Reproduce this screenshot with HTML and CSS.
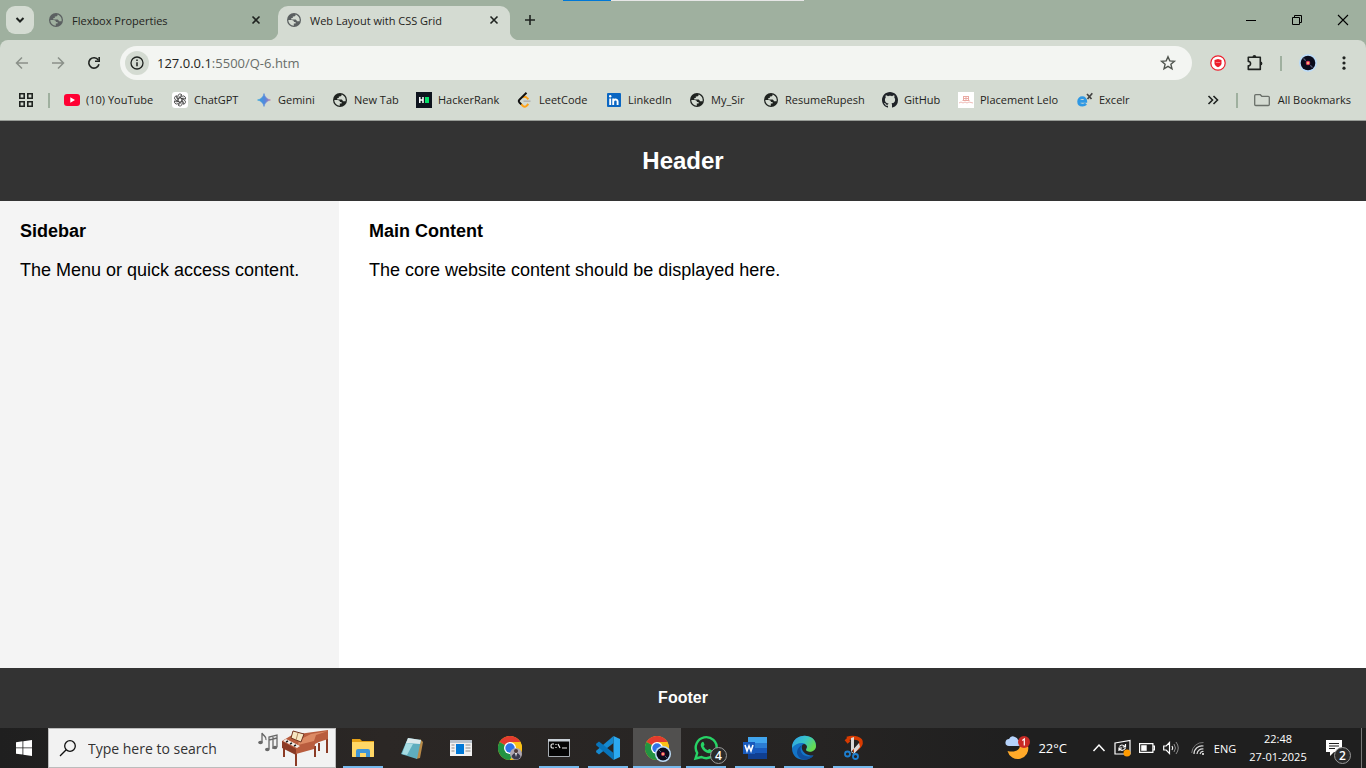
FILE: index.html
```
<!DOCTYPE html>
<html lang="en">
<head>
<meta charset="utf-8">
<title>Web Layout with CSS Grid</title>
<link rel="stylesheet" href="styles.css">
</head>
<body>
<svg class="defs" aria-hidden="true">
  <symbol id="globe" viewBox="0 0 16 16">
    <circle cx="8" cy="8" r="7" fill="currentColor"/>
    <path class="land" d="M2.300 7.900h3.200c1.500 0 2.500.8 2.500 2h1.600v1.700H7.800v2.200A5.800 5.800 0 0 1 2.300 7.900zM9.600 2.500c.1 1.200-.6 1.900-1.700 1.900H6.800v1.600H5.300v1.500h3.500c1.300 0 1.900.7 2.100 1.700h2.700c.6-2.600-.9-5.600-4-6.700z"/>
  </symbol>
  <symbol id="cross" viewBox="0 0 10 10"><path d="M1.500 1.500l7 7m0-7l-7 7" fill="none" stroke="currentColor" stroke-width="1.600"/></symbol>
  <symbol id="chrome" viewBox="0 0 24 24">
    <circle cx="12" cy="12" r="12" fill="#fbc116"/>
    <path d="M12 12L1.600 6A12 12 0 0 1 22.400 6z" fill="#e33b2e"/>
    <path d="M12 12L1.600 6A12 12 0 0 0 12 24l5.200-9z" fill="#229342"/>
    <path d="M12 6h10.400A12 12 0 0 1 12 24l5.200-9z" fill="#fbc116"/>
    <circle cx="12" cy="12" r="6" fill="#fff"/><circle cx="12" cy="12" r="4.700" fill="#2f73e8"/>
  </symbol>
  <symbol id="disc" viewBox="0 0 16 16">
    <circle cx="8" cy="8" r="8" fill="#bcdcf8"/><circle cx="8" cy="8" r="6.500" fill="#0a0b1c"/>
    <path d="M4 4l2 2M10 10l2 2" stroke="#505575"/><circle cx="8" cy="8" r="2" fill="#d93a63"/><circle cx="8" cy="8" r="1" fill="#ffc36b"/>
  </symbol>
</svg>

<div class="screen">
  <header class="browser">
    <div class="tabstrip">
      <button class="tab-search" aria-label="Search tabs"><svg width="10" height="10" viewBox="0 0 10 10"><path d="M1.500 3L5 6.500 8.500 3" fill="none" stroke="currentColor" stroke-width="2"/></svg></button>
      <div class="tab">
        <svg class="favicon" width="16" height="16"><use href="#globe"/></svg>
        <span class="tab-title">Flexbox Properties</span>
        <button class="tab-close" aria-label="Close tab"><svg width="10" height="10"><use href="#cross"/></svg></button>
      </div>
      <div class="tab active">
        <svg class="favicon" width="16" height="16"><use href="#globe"/></svg>
        <span class="tab-title">Web Layout with CSS Grid</span>
        <button class="tab-close" aria-label="Close tab"><svg width="10" height="10"><use href="#cross"/></svg></button>
      </div>
      <button class="new-tab" aria-label="New tab"><svg width="12" height="12" viewBox="0 0 12 12"><path d="M6 1v10M1 6h10" stroke="currentColor" stroke-width="1.600"/></svg></button>
      <div class="window-buttons">
        <button aria-label="Minimize"><svg width="10" height="10" viewBox="0 0 10 10"><path d="M0 5.500h10" stroke="currentColor"/></svg></button>
        <button aria-label="Restore"><svg width="10" height="10" viewBox="0 0 10 10"><path d="M.5 2.500h7v7h-7zM2.500 2V.5h7v7H8" fill="none" stroke="currentColor"/></svg></button>
        <button aria-label="Close"><svg width="10" height="10" viewBox="0 0 10 10"><path d="M0 0l10 10M10 0L0 10" stroke="currentColor" stroke-width="1.100"/></svg></button>
      </div>
      <div class="progress"><span class="progress-done"></span></div>
    </div>

    <div class="toolbar">
      <button class="tool muted" aria-label="Back"><svg width="16" height="16" viewBox="0 0 16 16"><path d="M14 8H3M8 2.500L2.500 8 8 13.500" fill="none" stroke="currentColor" stroke-width="1.500"/></svg></button>
      <button class="tool muted" aria-label="Forward"><svg width="16" height="16" viewBox="0 0 16 16"><path d="M2 8h11M8 2.500L13.500 8 8 13.500" fill="none" stroke="currentColor" stroke-width="1.500"/></svg></button>
      <button class="tool" aria-label="Reload"><svg width="16" height="16" viewBox="0 0 16 16"><path d="M13 9.300A5.200 5.200 0 1 1 12.300 5" fill="none" stroke="currentColor" stroke-width="1.600"/><path d="M14 2v5H9V5.400h3.400V2z" fill="currentColor"/></svg></button>
      <div class="omnibox">
        <button class="site-info" aria-label="Site information"><svg width="14" height="14" viewBox="0 0 14 14"><circle cx="7" cy="7" r="6" fill="none" stroke="currentColor" stroke-width="1.300"/><path d="M7 6.200v4M7 3.600v1.400" stroke="currentColor" stroke-width="1.500"/></svg></button>
        <div class="url"><span class="host">127.0.0.1</span>:5500/Q-6.htm</div>
        <button class="star" aria-label="Bookmark"><svg width="16" height="16" viewBox="0 0 16 16"><path d="M8 1.700l1.800 4.200 4.600.4-3.500 3 1.100 4.500L8 11.400l-4 2.400 1.100-4.500-3.500-3 4.600-.4z" fill="none" stroke="currentColor" stroke-width="1.400"/></svg></button>
      </div>
      <button class="tool" aria-label="Ad blocker"><svg width="16" height="16" viewBox="0 0 16 16"><circle cx="8" cy="8" r="7.200" fill="#fff" stroke="#ed1c2b" stroke-width="1.200"/><path d="M8 4l3.500 1v3.200c0 1.800-1.300 3-3.500 4-2.200-1-3.500-2.200-3.500-4V5z" fill="#ed1c2b"/><path d="M5.800 7.500h4.400" stroke="#fff" stroke-opacity=".4"/></svg></button>
      <button class="tool" aria-label="Extensions"><svg width="18" height="18" viewBox="0 0 18 18"><path d="M3.300 3.300h12v12.100h-12v-3.600c3 .3 3-4.700 0-4.400z" fill="none" stroke="currentColor" stroke-width="1.600" stroke-linejoin="round"/><path d="M7.500 3a1.900 1.900 0 0 1 3.800 0zM15.500 7.500a1.900 1.900 0 0 1 0 3.800z" fill="currentColor"/></svg></button>
      <span class="divider"></span>
      <button class="tool" aria-label="Profile"><svg width="18" height="18"><use href="#disc"/></svg></button>
      <button class="tool" aria-label="Menu"><svg width="16" height="16" viewBox="0 0 16 16" fill="currentColor"><circle cx="8" cy="2.800" r="1.600"/><circle cx="8" cy="8" r="1.600"/><circle cx="8" cy="13.200" r="1.600"/></svg></button>
    </div>

    <nav class="bookmarks" aria-label="Bookmarks">
      <button class="apps" aria-label="Apps"><svg width="14" height="14" viewBox="0 0 14 14"><path d="M.800.800h4.400v4.400H.8zM8.800.800h4.400v4.400H8.800zM.8 8.800h4.400v4.400H.8zM8.800 8.800h4.400v4.400H8.800z" fill="none" stroke="currentColor" stroke-width="1.600"/></svg></button>
      <span class="divider"></span>
      <div class="bookmark-list">
        <a href="#"><svg width="16" height="16" viewBox="0 0 16 16"><rect y="2" width="16" height="12" rx="3" fill="#ff0033"/><path d="M6.300 5.300v5.400L11 8z" fill="#fff"/></svg>(10) YouTube</a>
        <a href="#"><svg width="16" height="16" viewBox="0 0 16 16"><rect width="16" height="16" rx="3" fill="#fff"/><g fill="none" stroke="#333" stroke-width=".8"><path id="petal" d="M8 5.600L5.900 6.800V4.200a2.200 2.200 0 0 1 4.100-1.100L7.800 4.400v2.300"/><use href="#petal" transform="rotate(60 8 8)"/><use href="#petal" transform="rotate(120 8 8)"/><use href="#petal" transform="rotate(180 8 8)"/><use href="#petal" transform="rotate(240 8 8)"/><use href="#petal" transform="rotate(300 8 8)"/></g></svg>ChatGPT</a>
        <a href="#"><svg width="16" height="16" viewBox="0 0 16 16"><defs><linearGradient id="gem"><stop stop-color="#2fa3de"/><stop offset=".6" stop-color="#5a86dc"/><stop offset="1" stop-color="#b87aa8"/></linearGradient></defs><path d="M8 1.500C8.700 5 11 7.300 14.500 8 11 8.700 8.700 11 8 14.500 7.300 11 5 8.700 1.500 8 5 7.300 7.300 5 8 1.500z" fill="url(#gem)" stroke="url(#gem)" stroke-width=".6"/></svg>Gemini</a>
        <a href="#"><svg width="16" height="16"><use href="#globe"/></svg>New Tab</a>
        <a href="#"><svg width="16" height="16" viewBox="0 0 16 16"><path d="M0 0h16v16H0z" fill="#0e141e"/><path d="M3.800 5v6M7 5v6M3.800 8H7" stroke="#fff" stroke-width="1.500"/><path d="M9 5h4v6H9z" fill="#05e06a"/></svg>HackerRank</a>
        <a href="#"><svg width="16" height="16" viewBox="0 0 16 16"><path d="M6.500 9.200h7" stroke="#b3b3b3" stroke-width="1.600"/><path d="M4 12l2 2c1 .9 2.400.9 3.400 0l2-2M5.800 5.600c1.200-1.200 2.700-1.200 3.900 0l1.700 1.600" fill="none" stroke="#ffa116" stroke-width="1.900"/><path d="M9.500.7L2.400 7.700c-.9.900-.9 1.900 0 2.800L4.300 12.400" fill="none" stroke="#111" stroke-width="1.900"/></svg>LeetCode</a>
        <a href="#"><svg width="16" height="16" viewBox="0 0 16 16"><rect x="1" y="1" width="14" height="14" rx="1" fill="#0a66c2"/><path d="M4.200 6.500V13M7.200 6.500V13M7.300 9.500c0-2.400 4.300-2.800 4.300 0V13" fill="none" stroke="#fff" stroke-width="1.900"/><circle cx="4.200" cy="4.200" r="1.200" fill="#fff"/></svg>LinkedIn</a>
        <a href="#"><svg width="16" height="16"><use href="#globe"/></svg>My_Sir</a>
        <a href="#"><svg width="16" height="16"><use href="#globe"/></svg>ResumeRupesh</a>
        <a href="#"><svg width="16" height="16" viewBox="0 0 16 16"><path fill="#1f2328" d="M8 0C3.580 0 0 3.580 0 8c0 3.540 2.290 6.530 5.470 7.590.4.070.55-.17.55-.38 0-.19-.01-.82-.01-1.490-2.010.37-2.530-.49-2.690-.94-.09-.23-.48-.94-.82-1.130-.28-.15-.68-.52-.01-.53.63-.01 1.080.58 1.230.82.72 1.210 1.870.87 2.330.66.07-.52.28-.87.51-1.070-1.780-.2-3.640-.89-3.640-3.950 0-.87.31-1.590.82-2.150-.08-.2-.36-1.020.08-2.120 0 0 .67-.21 2.200.82.64-.18 1.320-.27 2-.27s1.360.09 2 .27c1.530-1.040 2.200-.82 2.200-.82.44 1.100.16 1.920.08 2.120.51.56.82 1.270.82 2.150 0 3.070-1.870 3.750-3.650 3.950.29.25.54.73.54 1.480 0 1.070-.01 1.930-.01 2.200 0 .21.15.46.55.38A8.010 8.010 0 0 0 16 8c0-4.420-3.580-8-8-8z"/></svg>GitHub</a>
        <a href="#"><svg width="16" height="16" viewBox="0 0 16 16"><path d="M0 0h16v16H0z" fill="#fff"/><g stroke="#e9aaa3" fill="none"><path d="M5 4.500h6M5 6.500h6M4.500 8.500h7M5.500 4v4M8 4v4M10.500 4v4"/><path d="M1 11l2-1 2 1 2-1 2 1 2-1 4 1" stroke-width=".8"/></g></svg>Placement Lelo</a>
        <a href="#"><svg width="16" height="16" viewBox="0 0 16 16"><path d="M1.500 9.300h7.300c0-2.300-1.500-3.600-3.500-3.600S1.600 7.200 1.600 9.400s1.600 3.700 3.900 3.700c1.500 0 2.600-.5 3.500-1.400" fill="none" stroke="#2e98e4" stroke-width="2.700"/><path d="M10 2l4.500 5M15.300 1.200L10.500 7" stroke="#444" stroke-width="1.700"/></svg>Excelr</a>
      </div>
      <button class="overflow" aria-label="More bookmarks"><svg width="12" height="10" viewBox="0 0 12 10"><path d="M1.500 1l4 4-4 4M6.500 1l4 4-4 4" fill="none" stroke="currentColor" stroke-width="1.600"/></svg></button>
      <span class="divider"></span>
      <button class="all-bookmarks"><svg width="16" height="14" viewBox="0 0 16 14"><path d="M1.700 1.700h4.600l1.500 1.600h6.500q1 0 1 1v7.200q0 1-1 1H1.700q-1 0-1-1V2.700q0-1 1-1z" fill="none" stroke="#6a706a" stroke-width="1.300"/></svg>All Bookmarks</button>
    </nav>
  </header>

  <div class="page">
    <header class="page-header"><h1>Header</h1></header>
    <aside class="sidebar"><h2>Sidebar</h2><p>The Menu or quick access content.</p></aside>
    <main class="content"><h2>Main Content</h2><p>The core website content should be displayed here.</p></main>
    <footer class="page-footer">Footer</footer>
  </div>

  <footer class="taskbar">
    <button class="start" aria-label="Start"><svg width="16" height="16" viewBox="0 0 16 16" fill="#fff"><path d="M0 2.200l6.500-.9v6.200H0zM7.300 1.200L16 0v7.500H7.300zM0 8.300h6.500v6.300L0 13.700zM7.300 8.300H16V16l-8.700-1.300z"/></svg></button>
    <label class="search">
      <svg width="18" height="18" viewBox="0 0 18 18"><circle cx="11" cy="7" r="5.300" fill="none" stroke="#111" stroke-width="1.300"/><path d="M7.200 10.800L1 17" stroke="#111" stroke-width="1.300"/></svg>
      <input type="text" placeholder="Type here to search" aria-label="Search">
      <svg width="72" height="38" viewBox="0 0 72 38">
        <g stroke="#686868" stroke-width="1.300" fill="none"><path d="M5 13V4c1 3 5 3 4 7M12 20V8l8-2v12M12 11l8-2M16 20V7"/></g>
        <g fill="#686868"><ellipse cx="3.500" cy="13.500" rx="2.300" ry="1.800"/><ellipse cx="10.300" cy="20.500" rx="2.300" ry="1.800"/><ellipse cx="18" cy="18.500" rx="2.300" ry="1.800"/></g>
        <path d="M27 16v12M39 24v13M58 17v11M70 9v15M62 14v8" stroke="#8b3b25" stroke-width="2"/>
        <path d="M25 12l10-6 14-2 22-3v9l-9 3-4 2-1 5-18 5-14-8z" fill="#b95d3e"/>
        <path d="M42 11l12-6 17-3-12 4-2 6-16 4z" fill="#dc8a64"/>
        <path d="M25 12l14 8v6l-14-7z" fill="#8b3b25"/>
        <path d="M26 12l3-2 14 7-3 2z" fill="#f6eee8"/><path d="M29 13l2-1M33 15l2-1M37 17l2-1" stroke="#222" stroke-width="1.500"/>
        <path d="M36 2l11 3-3 8-10-4z" fill="#f7e6c2" stroke="#70331f"/><path d="M41 4l-2 7" stroke="#b28a60"/>
      </svg>
    </label>
    <div class="apps-row">
      <button class="app running" aria-label="File Explorer"><svg width="24" height="24" viewBox="0 0 24 24"><path d="M1 3h8l2 2h12v16H1z" fill="#e5a117"/><path d="M1 6h22v14q0 1-1 1H2q-1 0-1-1z" fill="#ffd766"/><path d="M5 21v-6q0-2 2-2h10q2 0 2 2v6h-4v-4H9v4z" fill="#3f96d8"/></svg></button>
      <button class="app" aria-label="Notepad"><svg width="24" height="24" viewBox="0 0 24 24"><path d="M20 3l3 3-3 16-4 1z" fill="#b98b48"/><path d="M8 2l13 2-4 19L1 18z" fill="#5faebe"/><path d="M8 2l13 2-1 4L6 7z" fill="#dce9eb"/><path d="M6 7l7 1-6 11-5-1z" fill="#a7dce3"/></svg></button>
      <button class="app" aria-label="Run"><svg width="24" height="24" viewBox="0 0 24 24"><path d="M1 4h22v16H1z" fill="#f1f1f1"/><path d="M1 4h22v3H1z" fill="#b9c2cb"/><path d="M7 8h8v10H7z" fill="#0078d7"/><path d="M2.500 9h3M2.500 12h3M2.500 15h3M16.500 9h5M16.500 12h5M16.500 15h5" stroke="#8b8b8b"/></svg></button>
      <button class="app" aria-label="Chrome"><svg width="24" height="24" viewBox="0 0 24 24"><use href="#chrome"/><circle cx="18" cy="18" r="6" fill="#afa7b0"/><circle cx="18" cy="15" r="2" fill="#503a37"/><path d="M13.500 21q1-4 4.500-4t4.500 4q-4 5-9 0z" fill="#39394c"/><path d="M17 17h2l-1 4z" fill="#eee"/></svg></button>
      <button class="app running" aria-label="Command Prompt"><svg width="24" height="24" viewBox="0 0 24 24"><path d="M1.500 3.500h21v17h-21z" fill="#050505" stroke="#a7adb3"/><path d="M1 3h22v2.500H1z" fill="#c9d0d7"/><path d="M7 8H5q-1 0-1 2t1 2h2M9 8v1m0 2v1M11 8l2 4M15 12h5" fill="none" stroke="#eee" stroke-width="1.200"/></svg></button>
      <button class="app running" aria-label="Visual Studio Code"><svg width="24" height="24" viewBox="0 0 24 24"><path d="M17.500 0L24 3v18l-6.500 3z" fill="#2ba9f1"/><path d="M17.500 0v7L3 18.500.5 16.500q-1-1 0-2z" fill="#1689cf"/><path d="M17.500 24v-7L3 5.500.5 7.500q-1 1 0 2z" fill="#0874ba"/></svg></button>
      <button class="app running current" aria-label="Chrome profile"><svg width="24" height="24" viewBox="0 0 24 24"><use href="#chrome"/><use href="#disc" x="10" y="10" width="16" height="16"/></svg></button>
      <button class="app running" aria-label="WhatsApp, 4 unread"><svg width="24" height="24" viewBox="0 0 24 24"><path d="M1.500 22.500L3.200 17A10.500 10.500 0 1 1 7.500 21z" fill="none" stroke="#27d366" stroke-width="2.400"/><path d="M7.700 6.500q1.500-1.500 2 0l.8 2q.2.700-1 1.700 1.400 2.800 4.300 4 1.200-1.500 1.800-1.200l2.300 1.200q.7.500-.3 2c-2 2-5.500.7-7.600-1.200C7.500 12.500 5.500 9 7.700 6.500z" fill="#27d366"/></svg><span class="badge">4</span></button>
      <button class="app running" aria-label="Word"><svg width="24" height="24" viewBox="0 0 24 24"><path d="M5 1h19v6H5z" fill="#41a5ee"/><path d="M5 7h19v5H5z" fill="#2b7cd3"/><path d="M5 12h19v5H5z" fill="#185abd"/><path d="M5 17h19v6H5z" fill="#103f91"/><path d="M0 6h12v12H0z" fill="#185abd"/><path d="M2 9l2 6 2-5 2 5 2-6" fill="none" stroke="#fff" stroke-width="1.600"/></svg></button>
      <button class="app running" aria-label="Edge"><svg width="24" height="24" viewBox="0 0 24 24"><defs><linearGradient id="ed" x1="0" y1="0" x2="1" y2=".5"><stop stop-color="#2f9ded"/><stop offset=".55" stop-color="#38c5c7"/><stop offset="1" stop-color="#66dc4f"/></linearGradient></defs><path d="M0 12C0-4 24-4 24 9.500c0 5-6 7-9 5-2-1 0-2 0-4 0-1.500-1.500-2.500-3-2.500-4 0-3.500 12 9.500 11.500C16 26 0 26 0 12z" fill="#1475c8"/><path d="M0 12C0-4 24-4 24 10c0 5-6 7-9 5-2-1 0-2 0-4 0-5-10-6-15 1z" fill="url(#ed)"/><path d="M8.500 13c0 6 6 9 13 6.500C18 25 7 26 5 17c0-4 2-7 6-8-2 1-2.500 2-2.500 4z" fill="#104f9d"/></svg></button>
      <button class="app running" aria-label="Snip"><svg width="24" height="24" viewBox="0 0 24 24"><path d="M6 2.500c7-2 15-.5 14 5-1 4-5 6-8 7.500M5 3l3 3.500" fill="none" stroke="#d83b01" stroke-width="3.600"/><path d="M10 2l3-1v16l-3-2zM18 7l-8 9 3 2 6-7z" fill="#d9d9d9"/><circle cx="6.500" cy="18" r="2.500" fill="none" stroke="#1e7fd0" stroke-width="1.800"/><circle cx="14.500" cy="20.500" r="2.500" fill="none" stroke="#1e7fd0" stroke-width="1.800"/></svg></button>
    </div>
    <div class="tray">
      <button class="weather"><svg width="25" height="24" viewBox="0 0 25 24"><path d="M23 10a10.500 10.500 0 0 1-20.500 5c9 2 14-2 12-8z" fill="#ffa929"/><path d="M4 10q-4 0-3.500-4Q1 3 4 3q2-4 6-2 3 1 3 3 3 0 3 3t-3 3z" fill="#b6d3fb"/><circle cx="19" cy="6" r="6" fill="#c92a25"/><path d="M17.300 4.500L19.300 3v6.500" fill="none" stroke="#fff" stroke-width="1.200"/></svg>22°C</button>
      <button class="tray-icon" aria-label="Show hidden icons"><svg width="14" height="14" viewBox="0 0 14 14"><path d="M1.500 10L7 4l5.500 6" fill="none" stroke="#fff" stroke-width="1.500"/></svg></button>
      <button class="tray-icon" aria-label="Updates"><svg width="18" height="18" viewBox="0 0 18 18"><path d="M1 4l15-2.500V15H1z" fill="none" stroke="#fff" stroke-width="1.200"/><path d="M11.500 5v3H8.700M5 12V9h3M5.500 7.500q2-3 5.500 0M5.500 10q3 3 6-1" fill="none" stroke="#fff" stroke-width="1.200"/><circle cx="13" cy="14" r="3.500" fill="#ff9b00"/></svg></button>
      <button class="tray-icon" aria-label="Battery"><svg width="16" height="10" viewBox="0 0 16 10"><path d="M.6.600h13.300v8.800H.6zM14 3h1.400v4H14" fill="none" stroke="#fff" stroke-width="1.200"/><path d="M2.200 2.200h5.500v5.600H2.200z" fill="#fff"/></svg></button>
      <button class="tray-icon" aria-label="Volume"><svg width="16" height="14" viewBox="0 0 16 14"><path d="M.7 5h2.500l3.300-3.500v11L3.200 9H.7zM9 5q1.500 2 0 4" fill="none" stroke="#fff" stroke-width="1.200"/><path d="M11 3q3 4 0 8M13 1q4.500 6 0 12" fill="none" stroke="#8c8c8c"/></svg></button>
      <button class="tray-icon wide" aria-label="Network"><svg width="14" height="14" viewBox="0 0 14 14"><path d="M3 13A8 8 0 0 1 12.500 5M6 13a5.500 5.500 0 0 1 6.500-5M9 13q1-3 3.500-2.500" fill="none" stroke="#ddd" stroke-width="1.200"/><path d="M.7 12A11 11 0 0 1 12.500 1.500" fill="none" stroke="#777"/><circle cx="12" cy="13" r="1" fill="#fff"/></svg></button>
      <button class="language">ENG</button>
      <button class="clock"><time>22:48</time><span>27-01-2025</span></button>
      <button class="notifications" aria-label="2 notifications"><svg width="18" height="18" viewBox="0 0 18 18"><path d="M1 1h16v12H9l-4 4v-4H1z" fill="#fff"/><path d="M4 4.500h10M4 7h10M4 9.500h6" stroke="#1f1f1f"/></svg><span class="badge">2</span></button>
      <span class="desktop-edge"></span>
    </div>
  </footer>
</div>
</body>
</html>
```
FILE: styles.css
```
* { box-sizing: border-box; }
body {
  margin: 0;
  font-family: "Open Sans", "Noto Sans", sans-serif;
  font-size: 11px;
  color: #1f2320;
}
button {
  display: flex;
  align-items: center;
  justify-content: center;
  padding: 0;
  border: 0;
  background: none;
  color: inherit;
  font: inherit;
  white-space: nowrap;
}
svg { flex: none; overflow: visible; }
.defs { position: absolute; width: 0; height: 0; }

.screen { display: flex; flex-direction: column; min-height: 100vh; }

/* Browser chrome */
.browser { background: #9fb09f; border-bottom: 1px solid #979b96; }
.tabstrip { position: relative; display: flex; align-items: center; height: 40px; }
.tab-search { width: 28px; height: 28px; margin-left: 6px; border-radius: 9px; background: #d4dbd2; }
.tab {
  position: relative;
  display: flex;
  align-items: center;
  gap: 8px;
  width: 232px;
  height: 34px;
  padding: 0 8px 6px;
  margin: 6px 0 0 6px;
  --land: #9fb09f;
}
.favicon { color: #5b6061; }
.land { fill: var(--land, #d4dbd2); }
.tab.active { --land: #d4dbd2; background: #d4dbd2; border-radius: 10px 10px 0 0; }
.tab.active::before, .tab.active::after {
  content: "";
  position: absolute;
  bottom: 0;
  width: 10px;
  height: 10px;
}
.tab.active::before { left: -10px; background: radial-gradient(circle at 0 0, transparent 10px, #d4dbd2 11px); }
.tab.active::after { right: -10px; background: radial-gradient(circle at 100% 0, transparent 10px, #d4dbd2 11px); }
.tab-title { flex: 1; white-space: nowrap; }
.tab-close { width: 16px; height: 16px; }
.new-tab { width: 28px; height: 28px; margin-left: 6px; }
.window-buttons { display: flex; margin-left: auto; color: #000; }
.window-buttons button { width: 46px; height: 40px; }
.progress { position: absolute; top: 0; left: 563px; width: 241px; height: 1px; background: #e6e6e6; }
.progress-done { display: block; width: 20%; height: 1px; background: #0078d7; }

.toolbar {
  display: flex;
  align-items: center;
  height: 40px;
  padding: 6px 4px 0;
  border-radius: 8px 8px 0 0;
  background: #d4dbd2;
}
.tool { width: 36px; height: 34px; }
.muted { color: #8a9089; }
.omnibox {
  display: flex;
  align-items: center;
  flex: 1;
  height: 34px;
  margin: 0 8px;
  padding: 0 16px 0 5px;
  border-radius: 17px;
  background: #f3f5f2;
}
.site-info { width: 24px; height: 24px; border-radius: 50%; background: #d4dbd2; }
.url { flex: 1; margin-left: 8px; font-size: 13px; color: #686d69; }
.host { color: #1f2320; }
.star { color: #50554f; }
.divider { width: 2px; height: 15px; margin: 0 8px; background: #9fb09f; }

.bookmarks { display: flex; align-items: center; height: 40px; padding: 0 15px 0 14px; background: #d4dbd2; line-height: 14px; }
.apps { width: 24px; height: 24px; }
.bookmarks .divider { margin: 0 14px 0 10px; }
.bookmark-list {
  display: grid;
  grid-template-columns: 108px 84px 76px 84px 101px 89px 83px 74px 119px 76px 119px auto;
  flex: 1;
}
.bookmark-list a { display: flex; align-items: center; gap: 6px; color: inherit; text-decoration: none; white-space: nowrap; }
.overflow { width: 28px; height: 28px; }
.bookmarks .overflow + .divider { margin: 0 16px 0 9px; }
.all-bookmarks { gap: 8px; }

/* Web page */
.page {
  display: grid;
  grid-template: auto 1fr auto / 1fr 3fr;
  column-gap: 10px;
  flex: 1;
  background: #fff;
  color: #000;
  font: 18px/20px "Liberation Sans", Arial, sans-serif;
}
.page-header, .page-footer { grid-column: 1 / -1; background: #333; color: #fff; text-align: center; font-weight: bold; }
.page-header { padding: 20px; }
.page-header h1 { margin: 0; font-size: 24px; line-height: 40px; }
.page-footer { padding: 20px; font-size: 16px; }
.sidebar, .content { padding: 20px; }
.sidebar { background: #f4f4f4; }
.page h2 { margin: 0 0 19px; font-size: 18px; line-height: 20px; }
.page p { margin: 0; }

/* Taskbar */
.taskbar { display: flex; height: 40px; background: linear-gradient(90deg, #1f1f1f, #2b2725 28%, #262423 60%, #1f1f1f 75%); color: #fff; }
.start { width: 48px; }
.search {
  display: flex;
  align-items: center;
  width: 288px;
  padding: 0 6px 0 10px;
  border: 1px solid #bcbcbc;
  background: #f2f2f2;
}
.search input {
  flex: 1;
  min-width: 0;
  margin-left: 11px;
  padding: 0;
  border: 0;
  outline: 0;
  background: none;
  font: 14px "Open Sans", sans-serif;
}
.search input::placeholder { color: #333; opacity: 1; }
.apps-row { display: flex; gap: 1px; margin-left: 3px; }
.app { position: relative; width: 48px; }
.current { background: #51504f; }
.running::after { content: ""; position: absolute; bottom: 0; left: 4px; right: 4px; height: 2px; background: #76b9ed; }
.current::after { left: 0; right: 0; }
.badge {
  position: absolute;
  right: 3px;
  bottom: 4px;
  width: 17px;
  height: 17px;
  border: 1px solid #999;
  border-radius: 50%;
  background: #2b2b2b;
  font-size: 12px;
  font-weight: 600;
  line-height: 15px;
  text-align: center;
}
.tray { display: flex; align-items: stretch; margin-left: auto; }
.weather { gap: 8px; margin-right: 20px; font-size: 13px; }
.tray-icon { width: 24px; }
.wide { width: 30px; }
.language { width: 24px; }
.clock { flex-direction: column; width: 82px; line-height: 18px; }
.notifications { position: relative; width: 30px; }
.notifications .badge { right: -2px; }
.desktop-edge { width: 5px; margin-left: 12px; border-left: 1px solid #777; }
```
